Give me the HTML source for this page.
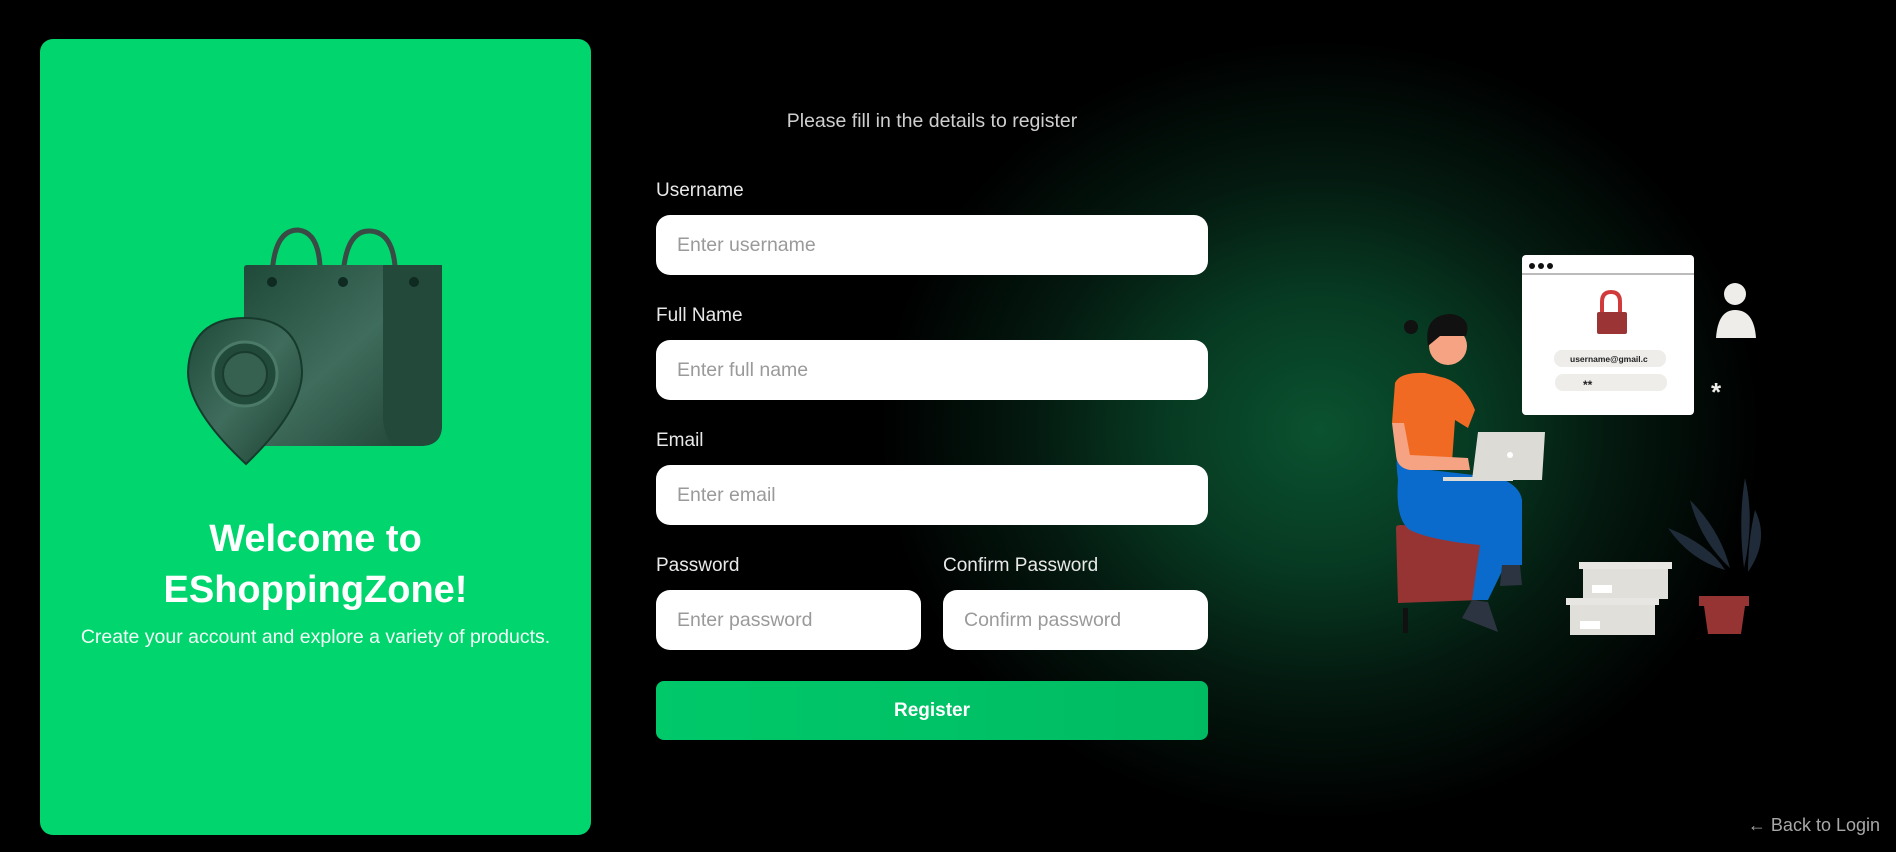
<!DOCTYPE html>
<html><head><meta charset="utf-8"><style>
*{box-sizing:border-box;margin:0;padding:0}
body{width:1896px;height:852px;overflow:hidden;font-family:"Liberation Sans",sans-serif;position:relative;
background:radial-gradient(ellipse 440px 390px at 1320px 430px,#0a5230 0%,#073a22 35%,#041a10 65%,#000 100%);}
.panel{position:absolute;left:40px;top:39px;width:551px;height:796px;background:#00d56e;border-radius:13px}
.t1{position:absolute;left:40px;width:551px;text-align:center;color:#fff;font-weight:bold;font-size:38px}
.sub{position:absolute;left:40px;width:551px;top:626px;text-align:center;color:#f2fff7;font-size:19.5px}
.lbl{position:absolute;color:#e8e8e8;font-size:19px}
.inp{position:absolute;height:60px;background:#fff;border-radius:14px;color:#9a9a9a;font-size:19.5px;padding-left:21px;line-height:60px}
.btn{position:absolute;left:656px;top:681px;width:552px;height:59px;border-radius:8px;background:linear-gradient(90deg,#00c96a,#00bb62);color:#fff;font-weight:bold;font-size:19px;text-align:center;line-height:59px}
</style></head><body>
<div class="panel"></div>
<svg style="position:absolute;left:0;top:0" width="1896" height="852">
<defs><linearGradient id="m" x1="0" y1="0" x2="1" y2="1"><stop offset="0" stop-color="#1f4a3a"/><stop offset=".5" stop-color="#3f6c5c"/><stop offset="1" stop-color="#1c3f31"/></linearGradient></defs>
<path d="M272 276 Q274 230 298 230 Q318 232 320 266" fill="none" stroke="#3a4a44" stroke-width="5"/>
<path d="M343 276 Q346 230 370 231 Q392 232 395 266" fill="none" stroke="#3a4a44" stroke-width="5"/>
<path d="M244 268 Q244 265 247 265 L438 265 Q442 265 442 268 L442 425 Q442 446 420 446 L250 446 Q244 446 244 440Z" fill="url(#m)"/>
<path d="M383 265 L442 265 L442 425 Q442 446 420 446 L395 446 Q385 440 383 420Z" fill="#23493a"/>
<circle cx="272" cy="282" r="5" fill="#0f2a20"/><circle cx="343" cy="282" r="5" fill="#0f2a20"/><circle cx="414" cy="282" r="5" fill="#0f2a20"/>
<path d="M245 318 Q300 318 302 372 Q302 410 246 464 Q188 410 188 372 Q190 318 245 318Z" fill="url(#m)" stroke="#163a2c" stroke-width="2"/>
<circle cx="245" cy="374" r="32" fill="#224a3b" stroke="#4c7a68" stroke-width="3"/>
<circle cx="245" cy="374" r="22" fill="#36604f" stroke="#193c2f" stroke-width="2"/>
<rect x="1522" y="255" width="172" height="160" rx="4" fill="#fff"/>
<line x1="1522" y1="274" x2="1694" y2="274" stroke="#777" stroke-width="1"/>
<circle cx="1532" cy="266" r="3" fill="#111"/><circle cx="1541" cy="266" r="3" fill="#111"/><circle cx="1550" cy="266" r="3" fill="#111"/>
<path d="M1602 316 V302 Q1602 292 1611 292 Q1620 292 1620 302 V316" fill="none" stroke="#d13a3a" stroke-width="4"/>
<rect x="1597" y="312" width="30" height="22" rx="2" fill="#9b3535"/>
<rect x="1554" y="350" width="112" height="17" rx="8" fill="#eeedea"/>
<text x="1570" y="362" font-size="8.5" font-weight="bold" fill="#222" font-family="Liberation Sans">username@gmail.c</text>
<rect x="1555" y="374" width="112" height="17" rx="8" fill="#eeedea"/>
<text x="1583" y="389" font-size="12" font-weight="bold" fill="#222">**</text>
<circle cx="1735" cy="294" r="11" fill="#eeedea"/><path d="M1716 338 Q1718 310 1735 310 Q1754 310 1756 338Z" fill="#eeedea"/>
<text x="1711" y="401" font-size="26" font-weight="bold" fill="#eeedea">*</text>
<g fill="#1f2b38"><path d="M1745 478 Q1755 520 1744 568 Q1738 520 1745 478Z"/><path d="M1690 500 Q1720 530 1730 568 Q1700 540 1690 500Z"/><path d="M1668 528 Q1710 545 1725 570 Q1690 560 1668 528Z"/><path d="M1755 510 Q1770 540 1748 572 Q1748 540 1755 510Z"/></g>
<path d="M1699 596 H1749 V606 H1745 L1741 634 H1708 L1704 606 H1699Z" fill="#963434"/>
<rect x="1579" y="562" width="93" height="7" fill="#e7e6e2"/><rect x="1583" y="569" width="85" height="30" fill="#e0dfda"/><rect x="1592" y="585" width="20" height="8" fill="#fff"/>
<rect x="1566" y="598" width="93" height="7" fill="#e7e6e2"/><rect x="1570" y="605" width="85" height="30" fill="#e0dfda"/><rect x="1580" y="621" width="20" height="8" fill="#fff"/>
<rect x="1403" y="608" width="5" height="25" fill="#111"/>
<path d="M1396 528 Q1396 525 1400 525 L1480 528 L1480 600 L1398 603Z" fill="#963434"/>
<path d="M1398 480 Q1390 420 1430 470 L1500 478 Q1520 486 1522 500 L1522 565 L1505 565 L1488 600 L1472 600 L1480 545 Q1430 540 1410 530 Q1395 520 1398 480Z" fill="#0a6bcc"/>
<path d="M1502 565 L1520 565 L1522 585 L1500 586Z" fill="#2b3440"/>
<path d="M1472 600 L1488 602 L1498 632 L1462 618Z" fill="#2b3440"/>
<path d="M1395 383 Q1400 372 1425 373 L1445 378 Q1465 385 1475 410 L1468 428 L1455 420 L1452 462 L1405 460 L1397 423 L1392 423Z" fill="#f06a23"/>
<path d="M1392 423 L1404 423 L1410 455 L1468 458 L1470 470 L1410 470 Q1397 468 1396 455Z" fill="#f6a383"/>
<circle cx="1448" cy="346" r="19" fill="#f6a383"/>
<path d="M1428 346 Q1423 314 1452 314 Q1472 318 1466 336 L1440 336 Z" fill="#111"/><circle cx="1411" cy="327" r="7" fill="#111"/>
<path d="M1478 432 L1545 432 L1542 480 L1472 480Z" fill="#dcdbd6"/><rect x="1443" y="477" width="70" height="4" fill="#dcdbd6"/><circle cx="1510" cy="455" r="3" fill="#fff"/>
</svg>
<div class="t1" style="top:518px">Welcome to</div>
<div class="t1" style="top:569px">EShoppingZone!</div>
<div class="sub">Create your account and explore a variety of products.</div>
<div style="position:absolute;left:656px;width:552px;top:110px;text-align:center;color:#cfcfcf;font-size:19.5px">Please fill in the details to register</div>
<div class="lbl" style="left:656px;top:180px">Username</div>
<div class="inp" style="left:656px;top:215px;width:552px">Enter username</div>
<div class="lbl" style="left:656px;top:305px">Full Name</div>
<div class="inp" style="left:656px;top:340px;width:552px">Enter full name</div>
<div class="lbl" style="left:656px;top:430px">Email</div>
<div class="inp" style="left:656px;top:465px;width:552px">Enter email</div>
<div class="lbl" style="left:656px;top:555px">Password</div>
<div class="lbl" style="left:943px;top:555px">Confirm Password</div>
<div class="inp" style="left:656px;top:590px;width:265px">Enter password</div>
<div class="inp" style="left:943px;top:590px;width:265px">Confirm password</div>
<div class="btn">Register</div>
<div style="position:absolute;right:16px;top:815px;color:#a8a8a8;font-size:18px">← Back to Login</div>
</body></html>
